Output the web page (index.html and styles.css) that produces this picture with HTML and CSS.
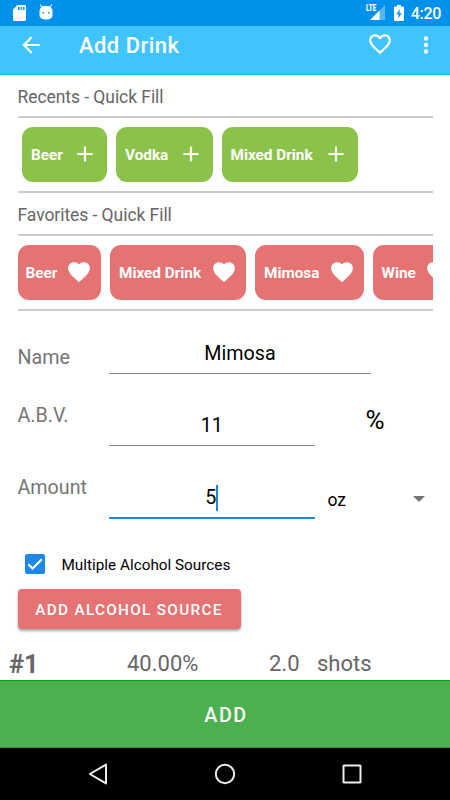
FILE: index.html
```html
<!DOCTYPE html>
<html lang="en">
<head>
<meta charset="utf-8">
<title>Add Drink</title>
<link rel="stylesheet" href="styles.css">
</head>
<body>
<svg class="defs" width="0" height="0" aria-hidden="true">
  <symbol id="plus" viewBox="0 0 24 24"><path d="M19 13h-6v6h-2v-6H5v-2h6V5h2v6h6z"/></symbol>
  <symbol id="heart" viewBox="0 0 24 24"><path d="M12 21.35l-1.45-1.32C5.4 15.36 2 12.28 2 8.5 2 5.42 4.42 3 7.5 3c1.74 0 3.41.81 4.5 2.09C13.09 3.81 14.76 3 16.5 3 19.58 3 22 5.42 22 8.500c0 3.780-3.400 6.860-8.550 11.540z"/></symbol>
</svg>
<div class="screen">
  <header class="status">
    <svg class="sd" viewBox="0 0 13 16"><path fill-rule="evenodd" d="M4.500 0H12a1 1 0 0 1 1 1v14a1 1 0 0 1-1 1H1a1 1 0 0 1-1-1V4.500zM5 2v3h1.500V2zm2.600 0v3h1.500V2zm2.500 0v3h1.500V2z"/></svg>
    <svg class="droid" viewBox="0 0 14 16"><path fill-rule="evenodd" d="M1.200 0l2 2.600C4.300 2 5.500 1.700 7 1.700s2.700.3 3.800.9l2-2.600.6.5-1.800 2.700C12.800 4.300 13.500 5.500 13.500 7v4c0 3-2.500 4.500-6.500 4.500S.5 14 .5 11V7c0-1.500.7-2.700 1.900-3.700L.6.5zM3.500 8v1.500h1.500V8zm5.500 0v1.500h1.500V8z"/></svg>
    <span class="spacer"></span>
    <span class="signal">
      <svg viewBox="0 0 15 15"><path fill-opacity=".35" d="M15 0v15H0z"/><path d="M9.500 5.500V15H0z"/></svg>
      <b class="lte">LTE</b>
    </span>
    <svg class="battery" viewBox="0 0 10 16"><path fill-rule="evenodd" d="M3 0h4v1.500h2a1 1 0 0 1 1 1V15a1 1 0 0 1-1 1H1a1 1 0 0 1-1-1V2.500a1 1 0 0 1 1-1h2zM6 4L2.300 9.300h2.400L4 13.500l3.800-5.300H5.400z"/></svg>
    <span class="clock">4:20</span>
  </header>
  <nav class="appbar">
    <svg class="back" viewBox="0 0 24 24"><path d="M20 11H7.830l5.590-5.590L12 4l-8 8 8 8 1.410-1.410L7.830 13H20z"/></svg>
    <h1>Add Drink</h1>
    <svg class="fav" viewBox="0 0 24 24"><path d="M16.500 3c-1.740 0-3.410.81-4.500 2.090C10.910 3.810 9.240 3 7.500 3 4.420 3 2 5.420 2 8.500c0 3.780 3.400 6.860 8.550 11.540L12 21.350l1.450-1.320C18.600 15.360 22 12.280 22 8.500 22 5.420 19.580 3 16.500 3zm-4.400 15.550l-.1.100-.1-.1C7.140 14.240 4 11.390 4 8.500 4 6.500 5.500 5 7.500 5c1.540 0 3.040.99 3.570 2.360h1.870C13.460 5.990 14.960 5 16.500 5c2 0 3.500 1.500 3.500 3.500 0 2.890-3.140 5.740-7.900 10.050z"/></svg>
    <svg class="more" viewBox="0 0 6 20"><circle cx="3" cy="3.500" r="2.200"/><circle cx="3" cy="10" r="2.200"/><circle cx="3" cy="16.500" r="2.200"/></svg>
  </nav>
  <main>
    <section class="quick">
      <h2>Recents - Quick Fill</h2>
      <div class="chips recents">
        <button class="chip w85">Beer<svg><use href="#plus"/></svg></button>
        <button class="chip w96">Vodka<svg><use href="#plus"/></svg></button>
        <button class="chip w136">Mixed Drink<svg><use href="#plus"/></svg></button>
      </div>
      <h2>Favorites - Quick Fill</h2>
      <div class="chips favorites">
        <button class="chip w84">Beer<svg><use href="#heart"/></svg></button>
        <button class="chip w136">Mixed Drink<svg><use href="#heart"/></svg></button>
        <button class="chip w108">Mimosa<svg><use href="#heart"/></svg></button>
        <button class="chip w87">Wine<svg><use href="#heart"/></svg></button>
      </div>
    </section>
    <form class="fields">
      <div class="row name">
        <label>Name</label>
        <div class="input wide"><span>Mimosa</span></div>
      </div>
      <div class="row abv">
        <label>A.B.V.</label>
        <div class="input"><span>11</span></div>
        <span class="percent">%</span>
      </div>
      <div class="row amount">
        <label>Amount</label>
        <div class="input focus"><span>5</span><i class="caret"></i></div>
        <div class="select"><span>oz</span><i class="arrow"></i></div>
      </div>
    </form>
    <div class="multi">
      <svg class="check" viewBox="0 0 20 20"><rect width="20" height="20" rx="2"/><path d="M3.300 10.200l4.300 4.300 9.200-9.200"/></svg>
      <span>Multiple Alcohol Sources</span>
    </div>
    <button class="source">ADD ALCOHOL SOURCE</button>
    <div class="entry"><b>#1</b><span class="pct">40.00%</span><span class="qty">2.0</span><span>shots</span></div>
  </main>
  <button class="add">ADD</button>
  <footer class="navbar">
    <svg viewBox="0 0 24 24"><path d="M20 2.600v18.800L3.800 12z"/></svg>
    <svg viewBox="0 0 24 24"><circle cx="12" cy="12" r="9.200"/></svg>
    <svg viewBox="0 0 24 24"><rect x="3.500" y="3.500" width="17" height="17" rx=".5"/></svg>
  </footer>
</div>
</body>
</html>
```

FILE: styles.css
```css
* { box-sizing: border-box; }
body { margin: 0; font-family: Roboto, "Liberation Sans", sans-serif; }
button { border: 0; font: inherit; padding: 0; }
svg { display: block; flex: none; }
h1, h2 { margin: 0; }
.defs { position: absolute; }
.screen { width: 450px; height: 800px; display: flex; flex-direction: column; overflow: hidden; background: #fff; }
.status { height: 26px; flex: none; background: #0091ea; display: flex; align-items: center; padding: 0 9px 0 13px; fill: #fff; color: #fff; }
.sd { width: 13px; height: 16px; }
.droid { width: 14px; height: 16px; margin: -2px 0 0 13px; }
.spacer { flex: 1; }
.signal { position: relative; width: 19px; height: 16px; display: flex; justify-content: flex-end; }
.signal svg { width: 15px; height: 15px; }
.lte { position: absolute; left: 0; top: -1px; font-size: 9px; line-height: 9px; font-weight: 900; transform: scaleX(.7); transform-origin: left; }
.battery { width: 10px; height: 16px; margin: 0 7px 0 9px; }
.clock { font-size: 16px; font-weight: 500; line-height: 26px; padding-top: 2px; letter-spacing: -.3px; }
.appbar { height: 49px; flex: none; background: #40c4ff; border-bottom: 1px solid #14b5fb; display: flex; align-items: center; padding: 0 21px 11px 18px; fill: #fff; color: #fff; }
.back { width: 26px; height: 26px; }
h1 { flex: 1; margin-left: 35px; font-size: 21.900px; font-weight: 500; line-height: 26px; padding-top: 2px; letter-spacing: .5px; }
.fav { width: 26px; height: 26px; margin: -1px 30px 0 0; }
.more { width: 6px; height: 20px; }
main { flex: 1; min-height: 0; display: flex; flex-direction: column; align-items: flex-start; }
.quick { width: 415px; margin-left: 17.500px; }
h2 { font-size: 17.500px; font-weight: 400; color: #666; line-height: 42px; height: 41px; padding-top: 1px; letter-spacing: -.06px; }
.chips { height: 77px; border: solid #ccc; border-width: 2px 0; display: flex; align-items: center; gap: 9px; overflow: hidden; }
.recents { padding-left: 4.500px; }
.chip { height: 55px; border-radius: 11px; flex: none; display: flex; align-items: center; justify-content: space-between; padding: 0 9px; font-size: 15.300px; font-weight: 700; color: #fff; fill: #fff; background: #8bc34a; }
.chip svg { width: 26px; height: 26px; margin-top: -1px; }
.favorites .chip { background: #e57373; }
.favorites .chip:first-child { padding-left: 8px; }
.w84 { width: 83.500px; } .w85 { width: 85px; } .w87 { width: 87px; } .w96 { width: 96.500px; } .w108 { width: 108.500px; } .w136 { width: 136px; }
.fields { margin: 0 18px 0 17.500px; width: 414px; }
.row { display: flex; align-items: flex-end; }
.row label { width: 91.500px; font-size: 19.700px; line-height: 24px; color: #757575; }
.input { width: 205.500px; height: 33px; border-bottom: 1px solid #888; display: flex; justify-content: center; font-size: 19.700px; line-height: 25px; color: #000; }
.wide { width: 262px; }
.name { height: 63px; }
.name label { margin-bottom: 4px; }
.abv { height: 72px; }
.abv label { margin-bottom: 18px; }
.percent { margin: 0 0 9px 51px; font-size: 26px; line-height: 34px; }
.amount { height: 73px; }
.amount label { margin-bottom: 19px; }
.focus { border-bottom: 2px solid #1e88e5; height: 34px; }
.caret { width: 2px; height: 26px; background: #1e88e5; }
.select { flex: 1; margin: 0 7px 8px 13px; display: flex; justify-content: space-between; align-items: center; font-size: 17.500px; line-height: 22px; }
.arrow { border: solid transparent; border-width: 6px 6px 0; border-top-color: #757575; margin-top: -2px; }
.multi { height: 70px; display: flex; align-items: center; padding: 20px 0 0 25px; font-size: 15.300px; gap: 16.500px; }
.multi span { padding-top: 2px; }
.check { width: 20px; height: 20px; fill: #1e88e5; }
.check path { fill: none; stroke: #fff; stroke-width: 2; }
.source { margin-left: 17.500px; width: 223px; height: 40px; flex: none; border-radius: 4px; background: #e57373; color: #fff; font-size: 15.300px; font-weight: 500; letter-spacing: 1.300px; padding-top: 2px; box-shadow: 0 2px 3px rgba(0,0,0,.35); }
.entry { display: flex; margin: 21px 0 0 9px; font-size: 22px; line-height: 28px; color: #666; }
.entry b { width: 118px; font-size: 25.500px; }
.pct { width: 142px; }
.qty { width: 48px; }
.add { height: 68px; flex: none; background: #4caf50; border-top: 1px solid #00a60b; border-bottom: 1px solid #3b8c3e; color: #fff; font-size: 19.700px; font-weight: 500; letter-spacing: 1.500px; padding: 3px 0 0 2px; }
.navbar { height: 52px; flex: none; background: #000; display: flex; align-items: center; justify-content: space-between; padding: 0 86px; }
.navbar svg { width: 24px; height: 24px; fill: none; stroke: #eee; stroke-width: 2; stroke-linejoin: round; }
```
